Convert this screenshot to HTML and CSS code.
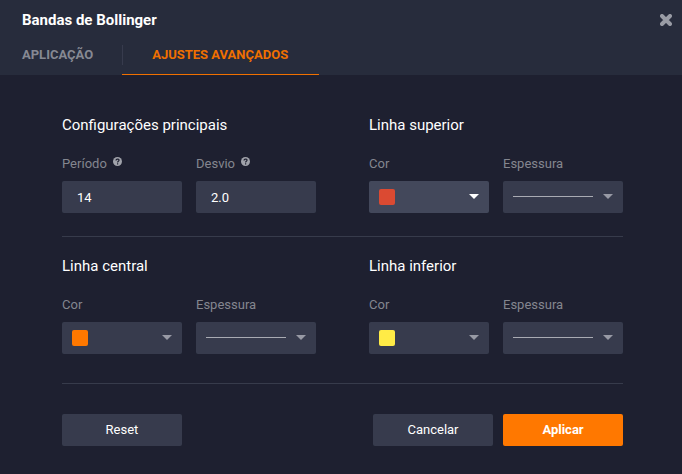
FILE: index.html
```html
<!DOCTYPE html>
<html lang="pt">

<head>
    <meta charset="UTF-8">
    <meta name="viewport" content="width=device-width, initial-scale=1.0">
    <title>Bandas de Bollinger</title>
    <link rel="stylesheet" href="styles.css">
</head>

<body>

    <header class="header">
        <div class="title-bar">
            <h1>Bandas de Bollinger</h1>
            <button type="button" class="close" aria-label="Fechar">
                <svg width="12" height="12" viewBox="0 0 12 12">
                    <path d="M2 2L10 10M10 2L2 10" stroke="currentColor" stroke-width="4" stroke-linecap="round" />
                </svg>
            </button>
        </div>
        <nav class="tabs">
            <a href="#aplicacao" class="tab">APLICAÇÃO</a>
            <a href="#ajustes" class="tab active">AJUSTES AVANÇADOS</a>
        </nav>
    </header>

    <form class="settings" id="ajustes">
        <div class="row">
            <section>
                <h2>Configurações principais</h2>
                <div class="fields">
                    <div class="field">
                        <label for="periodo">Período
                            <svg class="help" width="9" height="9" viewBox="0 0 9 9">
                                <circle cx="4.5" cy="4.5" r="4.5" fill="currentColor" />
                                <path class="help-mark" d="M3 3.5C3 1.6 6 1.6 6 3.3C6 4.3 4.6 4.2 4.6 5.4M4.6 6.2V7.4" />
                            </svg>
                        </label>
                        <input type="text" id="periodo" value="14">
                    </div>
                    <div class="field">
                        <label for="desvio">Desvio
                            <svg class="help" width="9" height="9" viewBox="0 0 9 9">
                                <circle cx="4.5" cy="4.5" r="4.5" fill="currentColor" />
                                <path class="help-mark" d="M3 3.5C3 1.6 6 1.6 6 3.3C6 4.3 4.6 4.2 4.6 5.4M4.6 6.2V7.4" />
                            </svg>
                        </label>
                        <input type="text" id="desvio" value="2.0">
                    </div>
                </div>
            </section>

            <section>
                <h2>Linha superior</h2>
                <div class="fields">
                    <div class="field">
                        <label for="cor-superior">Cor</label>
                        <div class="picker selected">
                            <select id="cor-superior">
                                <option>Vermelho</option>
                            </select>
                            <span class="swatch red"></span>
                            <span class="arrow"></span>
                        </div>
                    </div>
                    <div class="field">
                        <label for="espessura-superior">Espessura</label>
                        <div class="picker">
                            <select id="espessura-superior">
                                <option>1 px</option>
                            </select>
                            <span class="line"></span>
                            <span class="arrow"></span>
                        </div>
                    </div>
                </div>
            </section>
        </div>

        <div class="row">
            <section>
                <h2>Linha central</h2>
                <div class="fields">
                    <div class="field">
                        <label for="cor-central">Cor</label>
                        <div class="picker">
                            <select id="cor-central">
                                <option>Laranja</option>
                            </select>
                            <span class="swatch orange"></span>
                            <span class="arrow"></span>
                        </div>
                    </div>
                    <div class="field">
                        <label for="espessura-central">Espessura</label>
                        <div class="picker">
                            <select id="espessura-central">
                                <option>1 px</option>
                            </select>
                            <span class="line"></span>
                            <span class="arrow"></span>
                        </div>
                    </div>
                </div>
            </section>

            <section>
                <h2>Linha inferior</h2>
                <div class="fields">
                    <div class="field">
                        <label for="cor-inferior">Cor</label>
                        <div class="picker">
                            <select id="cor-inferior">
                                <option>Amarelo</option>
                            </select>
                            <span class="swatch yellow"></span>
                            <span class="arrow"></span>
                        </div>
                    </div>
                    <div class="field">
                        <label for="espessura-inferior">Espessura</label>
                        <div class="picker">
                            <select id="espessura-inferior">
                                <option>1 px</option>
                            </select>
                            <span class="line"></span>
                            <span class="arrow"></span>
                        </div>
                    </div>
                </div>
            </section>
        </div>

        <div class="actions">
            <button type="reset" class="btn reset">Reset</button>
            <button type="button" class="btn">Cancelar</button>
            <button type="submit" class="btn apply">Aplicar</button>
        </div>
    </form>

</body>

</html>
```
FILE: styles.css
```css
* {
    box-sizing: border-box;
}

body {
    font-family: Roboto, 'Liberation Sans', sans-serif;
    font-size: 13px;
    line-height: 20px;
    margin: 0;
    background-color: #1e2030;
    color: #fff;
}

h1,
h2 {
    font-size: 15px;
    line-height: 20px;
    margin: 0;
}

.header {
    background-color: #272c3c;
    padding-top: 10px;
}

.title-bar {
    display: flex;
    justify-content: space-between;
    align-items: center;
    padding: 0 10px 0 22px;
}

.close {
    display: flex;
    padding: 0;
    background: none;
    border: none;
    color: #999ca5;
    cursor: pointer;
}

.tabs {
    display: flex;
    padding-top: 15px;
    padding-left: 22px;
}

.tab {
    height: 30px;
    padding-right: 29px;
    color: #868993;
    font-weight: bold;
    text-decoration: none;
}

.tab.active {
    display: flex;
    padding-right: 31px;
    border-bottom: 1px solid #f07000;
    color: #f07000;
}

.tab.active::before {
    content: "";
    width: 1px;
    height: 20px;
    margin-right: 29px;
    background-color: #373b4d;
}

.settings {
    padding: 40px 59px 28px 62px;
}

.row {
    display: grid;
    grid-template-columns: 1fr 1fr;
    gap: 53px;
    padding-bottom: 23px;
    border-bottom: 1px solid #373b4b;
}

.row + .row {
    padding-top: 19px;
    padding-bottom: 29px;
}

h2 {
    margin-bottom: 19px;
    font-weight: normal;
}

.fields {
    display: grid;
    grid-template-columns: 1fr 1fr;
    gap: 14px;
}

.field label {
    display: flex;
    gap: 6px;
    margin-bottom: 7px;
    color: #84868f;
}

.help {
    margin-top: 3px;
    color: #a0a2aa;
}

.help-mark {
    fill: none;
    stroke: #1e2030;
    stroke-width: 1.2;
}

.field input,
.picker,
.btn {
    width: 100%;
    height: 32px;
    border: none;
    border-radius: 2px;
    background-color: #373b4d;
    color: #fff;
    font: inherit;
}

.field input {
    display: block;
    padding: 0 15px;
}

/* select, preview and arrow share one cell */
.picker {
    display: grid;
    align-items: center;
}

.picker > * {
    grid-area: 1 / 1;
}

.picker select {
    width: 100%;
    height: 32px;
    border: none;
    appearance: none;
    background: none;
    color: transparent;
    font: inherit;
    cursor: pointer;
}

.picker span {
    pointer-events: none;
}

.picker.selected {
    background-color: #43485b;
}

.swatch {
    width: 16px;
    height: 16px;
    margin-left: 10px;
    border-radius: 2px;
}

.red {
    background-color: #db4a32;
}

.orange {
    background-color: #ff7800;
}

.yellow {
    background-color: #ffeb46;
}

.line {
    height: 1px;
    margin: 0 30px 2px 10px;
    background-color: #a9abb3;
}

.arrow {
    justify-self: end;
    margin-right: 10px;
    margin-bottom: 1px;
    border: 5px solid transparent;
    border-top-color: #989aa5;
    border-bottom: none;
}

.selected .arrow {
    border-top-color: #fff;
}

.actions {
    display: flex;
    justify-content: flex-end;
    gap: 10px;
    padding-top: 30px;
}

.btn {
    width: 120px;
    cursor: pointer;
}

.reset {
    margin-right: auto;
}

.apply {
    background-color: #ff7800;
    font-weight: bold;
}
```
